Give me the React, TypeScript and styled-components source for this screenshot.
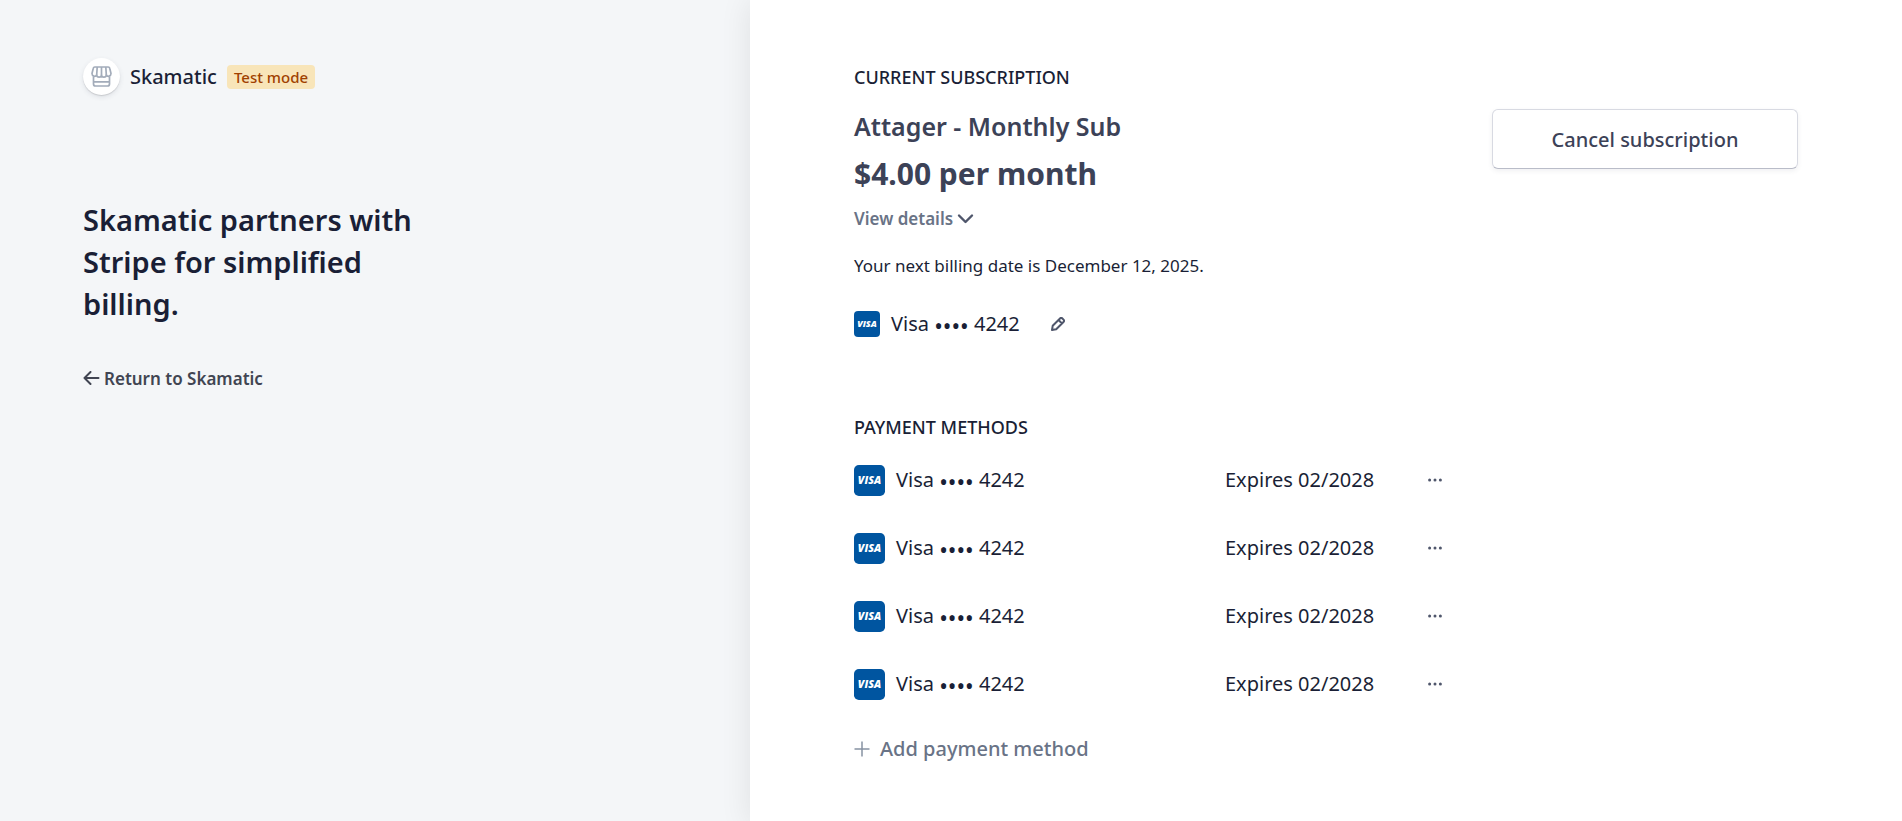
import React from "react";
import styled, { createGlobalStyle } from "styled-components";

const GlobalStyle = createGlobalStyle`
  *, *::before, *::after { box-sizing: border-box; }
  body {
    margin: 0;
    background: #ffffff;
    color: #1a1f36;
    font-family: "Segoe UI", "Noto Sans", "Open Sans", sans-serif;
    font-size: 20px;
    line-height: 28px;
  }
  h1, h2, h3, p { margin: 0; }
  button { font-family: inherit; cursor: pointer; }
  svg { display: block; flex: none; }
`;

const Page = styled.div`
  display: grid;
  grid-template-columns: 125fr 192fr;
  min-height: 100vh;
`;

const Sidebar = styled.aside`
  padding: 58px 83px;
  background: #f4f6f8;
`;

const Brand = styled.div`
  display: flex;
  align-items: center;
  height: 37px;
`;

const BrandIcon = styled.span`
  display: grid;
  place-items: center;
  width: 37px;
  height: 37px;
  border-radius: 50%;
  background: #ffffff;
  box-shadow: 0 2px 5px rgba(60, 66, 87, 0.12), 0 1px 1px rgba(0, 0, 0, 0.12);
`;

const BrandName = styled.span`
  margin-left: 10px;
  font-size: 20px;
  font-weight: 500;
`;

const Badge = styled.span`
  margin-left: 10px;
  padding: 0 7px;
  border-radius: 4px;
  background: #f8e5b9;
  color: #a04100;
  font-size: 15px;
  line-height: 24px;
  font-weight: 500;
`;

const Headline = styled.h1`
  max-width: 350px;
  margin-top: 104px;
  font-size: 29px;
  line-height: 42px;
  font-weight: 600;
`;

const ReturnLink = styled.a`
  display: inline-flex;
  align-items: center;
  gap: 4px;
  margin-top: 40px;
  color: #414552;
  font-size: 17px;
  font-weight: 600;
  text-decoration: none;
`;

const Main = styled.main`
  position: relative;
  padding: 63px 104px;
  background: #ffffff;
  box-shadow: 0 0 30px rgba(0, 0, 0, 0.09);
`;

const SectionTitle = styled.h2`
  font-size: 18px;
  line-height: 28px;
  font-weight: 500;
  text-transform: uppercase;
`;

const Subscription = styled.div`
  display: flex;
  justify-content: space-between;
  align-items: flex-start;
  margin-top: 18px;
`;

const PlanName = styled.h3`
  color: #3c4257;
  font-size: 25px;
  line-height: 34px;
  font-weight: 600;
`;

const Price = styled.p`
  margin-top: 9px;
  color: #3c4257;
  font-size: 30px;
  line-height: 44px;
  font-weight: 700;
`;

const DetailsButton = styled.button`
  display: flex;
  align-items: center;
  gap: 4px;
  margin-top: 9px;
  padding: 0;
  border: 0;
  background: none;
  color: #697386;
  font-size: 17px;
  line-height: 28px;
  font-weight: 600;
`;

const BillingDate = styled.p`
  margin-top: 19px;
  font-size: 17px;
  line-height: 28px;
`;

const CurrentCard = styled.div`
  display: flex;
  align-items: center;
  margin-top: 30px;
`;

const CardLabel = styled.span`
  margin-left: 11px;
`;

const Dots = styled.span`
  font-size: 23px;
  line-height: 20px;
  vertical-align: middle;
`;

const IconButton = styled.button`
  display: grid;
  place-items: center;
  padding: 0;
  border: 0;
  background: none;
  color: #4f566b;
`;

const EditButton = styled(IconButton)`
  margin-left: 31px;
`;

const CancelButton = styled.button`
  width: 306px;
  height: 60px;
  border: 1px solid #d8dae2;
  border-bottom-color: #b9bcc8;
  border-radius: 6px;
  background: #ffffff;
  box-shadow: 0 2px 5px rgba(60, 66, 87, 0.08);
  color: #3c4257;
  font-size: 20px;
  font-weight: 500;
`;

const Methods = styled.section`
  margin-top: 75px;
`;

const MethodTable = styled.table`
  width: 100%;
  margin-top: 5px;
  border-collapse: collapse;
  table-layout: fixed;

  td { height: 68px; padding: 0; }
  td:nth-child(1) { width: 39.3%; }
  td:nth-child(2) { width: 21.5%; }
`;

const MethodLabel = styled.div`
  display: flex;
  align-items: center;
`;

const AddButton = styled.button`
  display: flex;
  align-items: center;
  gap: 10px;
  margin-top: 17px;
  padding: 0;
  border: 0;
  background: none;
  color: #697386;
  font-size: 20px;
  line-height: 28px;
  font-weight: 500;
`;

const VisaMark = ({ size }: { size: number }) => (
  <svg width={size} height={size} viewBox="0 0 32 32" role="img" aria-label="Visa card">
    <rect width="32" height="32" rx="5" fill="#0055a0" />
    <text x="16" y="20" textAnchor="middle" fill="#ffffff" fontFamily="Open Sans, sans-serif" fontSize="11" fontWeight="800" fontStyle="italic">
      VISA
    </text>
  </svg>
);

const StoreIcon = () => (
  <svg width="21" height="21" viewBox="0 0 21 21" fill="none" stroke="#a3acba" strokeWidth="1.7" strokeLinejoin="round">
    <path d="M3.800 1h13.400a1.500 1.500 0 0 1 1.500 1.200L20 7.500a2.500 2.800 0 0 1-4.700 1.300a2.400 2.400 0 0 1-4.800 0a2.400 2.400 0 0 1-4.800 0A2.500 2.800 0 0 1 1 7.500L2.300 2.200A1.500 1.500 0 0 1 3.800 1z" />
    <path d="M6.200 1l-0.500 7.800M10.500 1v7.800M14.800 1l0.500 7.800" />
    <path d="M2.500 10.500v7.500a2 2 0 0 0 2 2h12a2 2 0 0 0 2-2v-7.500M2.500 15.800h16" />
  </svg>
);

const CardNumber = ({ last4 }: { last4: string }) => (
  <CardLabel>
    Visa <Dots>••••</Dots> {last4}
  </CardLabel>
);

const methods = [1, 2, 3, 4].map((id) => ({ id, last4: "4242", expires: "02/2028" }));

export default function App() {
  return (
    <>
      <GlobalStyle />
      <Page>
        <Sidebar>
          <Brand>
            <BrandIcon><StoreIcon /></BrandIcon>
            <BrandName>Skamatic</BrandName>
            <Badge>Test mode</Badge>
          </Brand>
          <Headline>Skamatic partners with Stripe for simplified billing.</Headline>
          <ReturnLink href="#">
            <svg width="17" height="16" viewBox="0 0 17 16" fill="none" stroke="currentColor" strokeWidth="2" strokeLinecap="round" strokeLinejoin="round">
              <path d="M15.500 7H1.500M7.500 1L1.500 7L7.500 13" />
            </svg>
            Return to Skamatic
          </ReturnLink>
        </Sidebar>
        <Main>
          <section>
            <SectionTitle>Current subscription</SectionTitle>
            <Subscription>
              <div>
                <PlanName>Attager - Monthly Sub</PlanName>
                <Price>$4.00 per month</Price>
                <DetailsButton type="button">
                  View details
                  <svg width="17" height="12" viewBox="0 0 17 12" fill="none" stroke="#4f566b" strokeWidth="2.4" strokeLinecap="round" strokeLinejoin="round">
                    <path d="M2 2.500L8.500 9L15 2.500" />
                  </svg>
                </DetailsButton>
                <BillingDate>Your next billing date is December 12, 2025.</BillingDate>
                <CurrentCard>
                  <VisaMark size={26} />
                  <CardNumber last4="4242" />
                  <EditButton type="button" aria-label="Edit payment method">
                    <svg width="14" height="14" viewBox="0 0 14 14" fill="none" stroke="currentColor" strokeWidth="2" strokeLinejoin="round">
                      <path d="M1 13l0.700-4.200L9 1.500a1.700 1.700 0 0 1 2.400 0l1.100 1.100a1.700 1.700 0 0 1 0 2.400L5.200 12.300zM7.500 3l3.500 3.500" />
                    </svg>
                  </EditButton>
                </CurrentCard>
              </div>
              <CancelButton type="button">Cancel subscription</CancelButton>
            </Subscription>
          </section>
          <Methods>
            <SectionTitle>Payment methods</SectionTitle>
            <MethodTable>
              <tbody>
                {methods.map((method) => (
                  <tr key={method.id}>
                    <td>
                      <MethodLabel>
                        <VisaMark size={31} />
                        <CardNumber last4={method.last4} />
                      </MethodLabel>
                    </td>
                    <td>Expires {method.expires}</td>
                    <td>
                      <IconButton type="button" aria-label="Payment method options">
                        <svg width="14" height="4" viewBox="0 0 14 4" fill="currentColor">
                          <circle cx="1.600" cy="2" r="1.500" />
                          <circle cx="7" cy="2" r="1.500" />
                          <circle cx="12.400" cy="2" r="1.500" />
                        </svg>
                      </IconButton>
                    </td>
                  </tr>
                ))}
              </tbody>
            </MethodTable>
            <AddButton type="button">
              <svg width="16" height="16" viewBox="0 0 16 16" fill="none" stroke="#8792a2" strokeWidth="1.500">
                <path d="M8 0.500v15M0.500 8h15" />
              </svg>
              Add payment method
            </AddButton>
          </Methods>
        </Main>
      </Page>
    </>
  );
}
